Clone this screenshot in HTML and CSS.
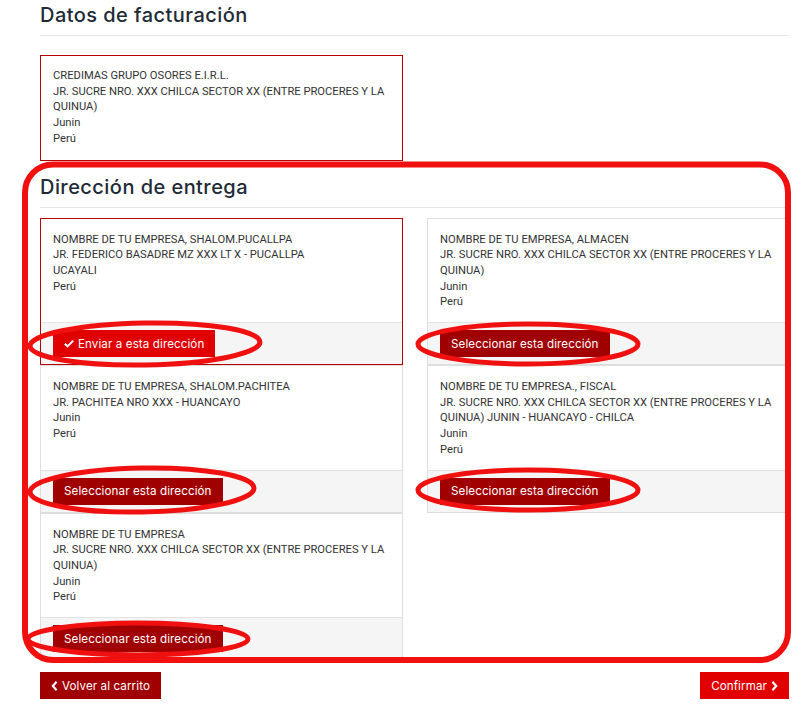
FILE: index.html
```html
<!DOCTYPE html>
<html lang="es">
<head>
<meta charset="utf-8">
<title>Checkout</title>
<link rel="stylesheet" href="styles.css">
</head>
<body>
<div class="page">
  <h2 class="section-title">Datos de facturación</h2>
  <div class="billing">
    <div class="card selected">
      <div class="card-body billing-body">
        CREDIMAS GRUPO OSORES E.I.R.L.<br>
        JR. SUCRE NRO. XXX CHILCA SECTOR XX (ENTRE PROCERES Y LA QUINUA)<br>
        Junin<br>
        Perú
      </div>
    </div>
  </div>

  <h2 class="section-title second">Dirección de entrega</h2>
  <div class="grid">
    <div class="card selected">
      <div class="card-body">
        NOMBRE DE TU EMPRESA, SHALOM.PUCALLPA<br>
        JR. FEDERICO BASADRE MZ XXX LT X - PUCALLPA<br>
        UCAYALI<br>
        Perú
      </div>
      <div class="card-footer">
        <span class="btn btn-active"><svg class="ico" viewBox="0 0 12 10" width="10" height="9"><path d="M1 5.2 L4.3 8.4 L11 1.6" fill="none" stroke="#fff" stroke-width="2.4"/></svg>Enviar a esta dirección</span>
      </div>
    </div>
    <div class="card">
      <div class="card-body">
        NOMBRE DE TU EMPRESA, ALMACEN<br>
        JR. SUCRE NRO. XXX CHILCA SECTOR XX (ENTRE PROCERES Y LA QUINUA)<br>
        Junin<br>
        Perú
      </div>
      <div class="card-footer"><span class="btn">Seleccionar esta dirección</span></div>
    </div>
    <div class="card">
      <div class="card-body">
        NOMBRE DE TU EMPRESA, SHALOM.PACHITEA<br>
        JR. PACHITEA NRO XXX - HUANCAYO<br>
        Junin<br>
        Perú
      </div>
      <div class="card-footer"><span class="btn">Seleccionar esta dirección</span></div>
    </div>
    <div class="card">
      <div class="card-body">
        NOMBRE DE TU EMPRESA., FISCAL<br>
        JR. SUCRE NRO. XXX CHILCA SECTOR XX (ENTRE PROCERES Y LA QUINUA) JUNIN - HUANCAYO - CHILCA<br>
        Junin<br>
        Perú
      </div>
      <div class="card-footer"><span class="btn">Seleccionar esta dirección</span></div>
    </div>
    <div class="card">
      <div class="card-body">
        NOMBRE DE TU EMPRESA<br>
        JR. SUCRE NRO. XXX CHILCA SECTOR XX (ENTRE PROCERES Y LA QUINUA)<br>
        Junin<br>
        Perú
      </div>
      <div class="card-footer"><span class="btn">Seleccionar esta dirección</span></div>
    </div>
  </div>

  <div class="actions">
    <span class="btn"><svg class="ico" viewBox="0 0 8 12" width="7" height="10"><path d="M6.5 1 L2 6 L6.5 11" fill="none" stroke="#fff" stroke-width="2.6"/></svg>Volver al carrito</span>
    <span class="btn btn-active">Confirmar<svg class="ico right" viewBox="0 0 8 12" width="7" height="10"><path d="M1.5 1 L6 6 L1.5 11" fill="none" stroke="#fff" stroke-width="2.6"/></svg></span>
  </div>
</div>

<svg class="marks" width="806" height="718" viewBox="0 0 806 718">
  <g fill="none" stroke="#f01010">
    <rect x="25" y="164.5" width="763" height="495.5" rx="28" stroke-width="6"/>
    <ellipse cx="145" cy="344" rx="115" ry="21" stroke-width="5" transform="rotate(-1 145 344)"/>
    <ellipse cx="528" cy="344" rx="110" ry="20" stroke-width="5"/>
    <ellipse cx="142" cy="490" rx="112" ry="22" stroke-width="5" transform="rotate(-1 142 490)"/>
    <ellipse cx="528" cy="490" rx="110" ry="20" stroke-width="5"/>
    <ellipse cx="138" cy="639" rx="110" ry="16" stroke-width="5"/>
  </g>
</svg>
</body>
</html>
```

FILE: styles.css
```css
html, body {
  margin: 0;
  padding: 0;
  background: #fff;
}
body {
  width: 806px;
  height: 718px;
  overflow: hidden;
  position: relative;
  font-family: Roboto, "Liberation Sans", sans-serif;
  color: #333;
}
.page {
  width: 749px;
  padding-left: 40px;
}
.section-title {
  margin: 0;
  font-family: Inter, "Open Sans", sans-serif;
  font-weight: 500;
  font-size: 20px;
  letter-spacing: 0.45px;
  line-height: 30px;
  color: #1e2a36;
  padding-bottom: 5px;
  border-bottom: 1px solid #e5e5e5;
}
.section-title.second {
  margin-top: 11px;
}
.billing {
  margin-top: 19px;
  width: 363px;
}
.grid {
  margin-top: 10px;
  display: grid;
  grid-template-columns: 363px 363px;
  column-gap: 24px;
  row-gap: 0;
  align-items: stretch;
}
.card {
  border: 1px solid #dedede;
  display: flex;
  flex-direction: column;
  background: #fff;
}
.card.selected {
  border-color: #b80000;
}
.card-body {
  flex: 1;
  font-size: 11.2px;
  line-height: 15.7px;
  padding: 13px 12px 12px 12px;
}
.card-body.billing-body {
  padding: 12px 12px 13px 12px;
}
.card-footer {
  background: #f5f5f5;
  border-top: 1px solid #e2e2e2;
  padding: 7px 12px 7px 12px;
  display: flex;
}
.btn {
  display: inline-flex;
  align-items: center;
  height: 27px;
  padding: 0 11px;
  background: #a10000;
  color: #fff;
  font-family: Inter, "Open Sans", sans-serif;
  font-size: 11.6px;
  letter-spacing: 0.1px;
  font-weight: 400;
  white-space: nowrap;
}
.btn-active {
  background: #e10000;
}
.ico {
  margin-right: 4px;
}
.ico.right {
  margin-right: 0;
  margin-left: 4px;
}
.actions {
  margin-top: 12px;
  display: flex;
  justify-content: space-between;
}
.marks {
  position: absolute;
  left: 0;
  top: 0;
  pointer-events: none;
}
```
